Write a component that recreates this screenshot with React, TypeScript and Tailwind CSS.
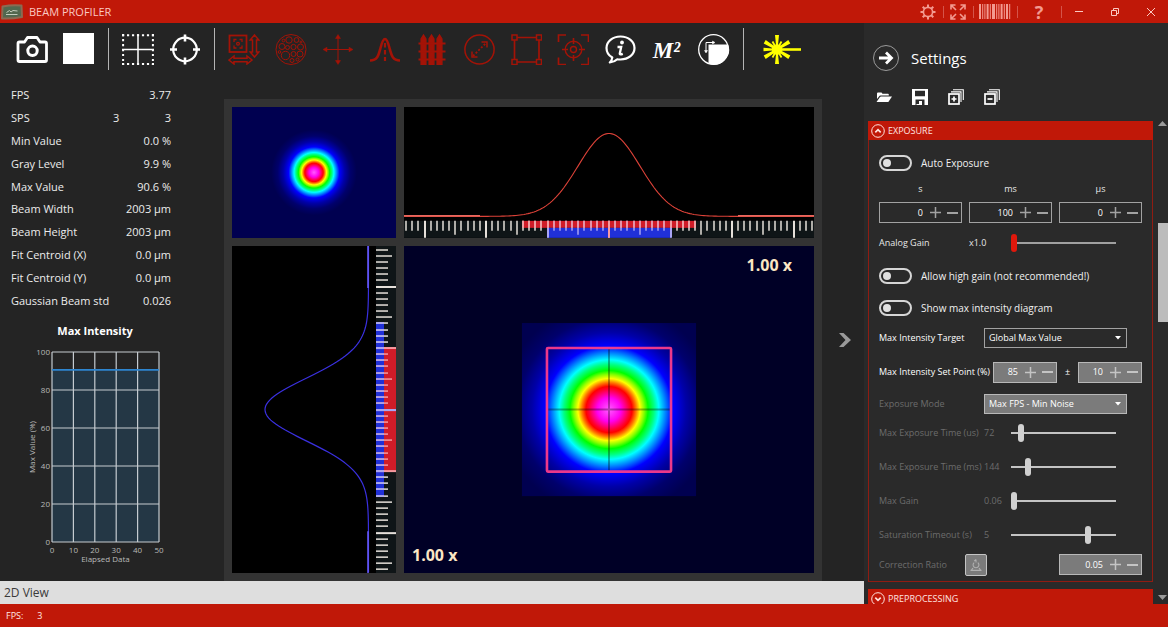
import React, { useState } from "react";

const stats: { label: string; mid?: string; value: string }[] = [
  { label: "FPS", value: "3.77" },
  { label: "SPS", mid: "3", value: "3" },
  { label: "Min Value", value: "0.0 %" },
  { label: "Gray Level", value: "9.9 %" },
  { label: "Max Value", value: "90.6 %" },
  { label: "Beam Width", value: "2003 µm" },
  { label: "Beam Height", value: "2003 µm" },
  { label: "Fit Centroid (X)", value: "0.0 µm" },
  { label: "Fit Centroid (Y)", value: "0.0 µm" },
  { label: "Gaussian Beam std", value: "0.026" },
];

/* ---------- icons ---------- */

function Icon({ children, className = "h-8 w-8" }: { children: React.ReactNode; className?: string }) {
  return (
    <svg viewBox="0 0 32 32" fill="none" stroke="currentColor" aria-hidden="true" className={className}>
      {children}
    </svg>
  );
}

const CameraIcon = () => (
  <Icon>
    <path d="M3.5 9h5l3-4.500h9.500l3 4.500h5a1.500 1.500 0 0 1 1.500 1.500v16.500a1.500 1.500 0 0 1-1.500 1.500h-25.500A1.500 1.500 0 0 1 2 27V10.500A1.500 1.500 0 0 1 3.500 9z" strokeWidth="2.800" strokeLinejoin="round" />
    <circle cx="16.500" cy="17.800" r="4.700" strokeWidth="3" />
  </Icon>
);

const GridIcon = () => (
  <Icon>
    <path d="M0 2.200h32M0 31h32" strokeWidth="2" strokeDasharray="2.200 2.780" />
    <path d="M1.100 1v31M30.900 1v31" strokeWidth="2" strokeDasharray="2.200 2.780" />
    <path d="M16 1v31M0 16.500h32" strokeWidth="1.500" />
  </Icon>
);

const TargetIcon = () => (
  <Icon>
    <circle cx="16" cy="16.500" r="11.800" strokeWidth="2.200" />
    <path d="M16 1.500v7M16 24.500v7M1 16.500h7M24 16.500h7" strokeWidth="2.600" />
  </Icon>
);

const RoiSizeIcon = () => (
  <Icon>
    <rect x="1.500" y="2.500" width="17" height="16.500" strokeWidth="1.800" />
    <path d="M6 9V6.500h2.500M11.500 6.500H14V9M14 12.500V15h-2.500M8.500 15H6v-2.500" strokeWidth="1.300" />
    <circle cx="10" cy="10.800" r="1.400" strokeWidth="1.300" />
    <path d="M26.500 2l4.300 5h-2.300v12h2.300l-4.300 5-4.300-5h2.300V7h-2.300zM1 27l5-4v2.200h13V23l5 4-5 4v-2.200H6V31z" strokeWidth="1.500" />
  </Icon>
);

const HolesIcon = () => (
  <Icon>
    <g strokeWidth="1">
      <circle cx="16" cy="16.500" r="15" />
      <circle cx="14" cy="7" r="3.200" />
      <circle cx="21.500" cy="7" r="2.400" />
      <circle cx="7" cy="13.500" r="3" />
      <circle cx="12.500" cy="14.500" r="2" />
      <circle cx="18.500" cy="14" r="2.600" />
      <circle cx="25.500" cy="14" r="3" />
      <circle cx="10.500" cy="22.500" r="4.200" />
      <circle cx="18.500" cy="21" r="2.500" />
      <circle cx="25" cy="21" r="3" />
      <circle cx="17" cy="27.500" r="2" />
      <circle cx="22.500" cy="26.500" r="1.500" />
      <circle cx="4.500" cy="19" r="1.300" />
      <circle cx="8.500" cy="7.500" r="1.300" />
      <circle cx="26" cy="9" r="1" />
    </g>
  </Icon>
);

const MoveIcon = () => (
  <Icon>
    <path d="M16 3v27M3 16.500h26" strokeWidth="1" />
    <path d="M16 1.500l2.500 4h-5zM16 31.500l2.500-4h-5zM1 16.500l4-2.300v4.600zM31 16.500l-4-2.300v4.600z" strokeWidth="0.500" fill="currentColor" />
  </Icon>
);

const GaussIcon = () => (
  <Icon>
    <path d="M1 27.500c7.500 0 8.500-5 10.500-12.500C13 9 14.500 6 16 6s3 3 4.500 9c2 7.500 3 12.500 10.500 12.500" strokeWidth="2.600" />
    <path d="M16 10v18" strokeWidth="2.200" strokeDasharray="4.500 2.500" />
  </Icon>
);

const FenceIcon = () => (
  <Icon>
    <path d="M5 31.500V6L7.500 2 10 6v25.500zM13 31.500V6l2.500-4L18 6v25.500zM21 31.500V6l2.500-4L26 6v25.500z" fill="currentColor" strokeWidth="1.200" />
    <path d="M2.500 10.500h27M2.500 18.500h27M2.500 26.500h27" strokeWidth="2.200" />
  </Icon>
);

const DiameterIcon = () => (
  <Icon>
    <circle cx="16.500" cy="16.500" r="14.600" strokeWidth="1.500" />
    <path d="M10 23l13-13" strokeWidth="1.800" strokeDasharray="2 1.800" />
    <path d="M18.500 9h5.500v5.500M9 18.500V24h5.500" strokeWidth="1.500" />
  </Icon>
);

const BoxIcon = () => (
  <Icon>
    <path d="M7 4.500h19.500M7 29h19.500M4.500 7v19.500M29 7v19.500" strokeWidth="1.700" />
    <path d="M2 2h5v5H2zM26.500 2h5v5h-5zM2 26.500h5v5H2zM26.500 26.500h5v5h-5z" strokeWidth="1.500" />
  </Icon>
);

const FocusIcon = () => (
  <Icon>
    <path d="M1.500 9V2H9M24 2h7.500v7M31.500 24.500v7H24M9 31.500H1.500v-7" strokeWidth="1.700" />
    <circle cx="16.500" cy="16.500" r="8.300" strokeWidth="1.400" />
    <circle cx="16.500" cy="16.500" r="3" strokeWidth="1.400" />
    <path d="M16.500 5v6M16.500 22v6M5 16.500h6M22 16.500h6" strokeWidth="1.600" />
  </Icon>
);

const InfoBubbleIcon = () => (
  <Icon>
    <path d="M16.500 3.500C8.500 3.500 2.500 8.500 2.500 15c0 4.200 2.300 7.500 5.800 9.500-.2 2-1 3.500-2.500 5 3-.3 5.500-1.300 7.500-3.200 1 .2 2.100.2 3.200.2 8 0 14-5 14-11.500s-6-11.500-14-11.500z" strokeWidth="2.200" strokeLinejoin="round" />
    <circle cx="18" cy="9.500" r="1.900" fill="currentColor" stroke="none" />
    <path d="M13.500 14h3.700l-1.400 6.500q-.3 1.500 3 .3" strokeWidth="2.300" />
  </Icon>
);

const ReflectIcon = () => (
  <Icon>
    <path d="M10.500 11.500h19.700a15 15 0 0 1-19.700 19z" fill="currentColor" stroke="none" />
    <circle cx="15.500" cy="16.500" r="14.800" strokeWidth="1.300" />
    <path d="M8 19V9.500h7.500" strokeWidth="1" />
    <path d="M8 20l-1.500-2.500h3zM17 9.500L14.500 8v3z" strokeWidth="0.500" fill="currentColor" />
  </Icon>
);

const LaserIcon = () => (
  <svg viewBox="0 0 40 32" fill="none" stroke="currentColor" aria-hidden="true" className="h-8 w-10">
    <circle cx="16" cy="16.500" r="5.300" fill="currentColor" stroke="none" />
    <path d="M16 16.500h24" strokeWidth="2.600" />
    <path d="M14 2h4l-1.200 12h-1.600zM14 31h4l-1.200-12h-1.600zM2.500 14.800v3.400l12-.9v-1.600zM2.700 10.600l2-3.600L16 15l-1 2zM2.700 22.400l2 3.600L16 18l-1-2zM29.300 10.600l-2-3.600L16 15l1 2zM29.300 22.400l-2 3.600L16 18l1-2z" fill="currentColor" stroke="none" />
    <path d="M16 16.500L11.500 8.500M16 16.500l-4.500 8M16 16.500l4.500-8M16 16.500l4.500 8" strokeWidth="1.800" />
  </svg>
);

/* ---------- title bar ---------- */

function TitleButton({ label, className, children }: { label: string; className: string; children: React.ReactNode }) {
  return (
    <button type="button" aria-label={label} className={`flex h-full items-center justify-center ${className}`}>
      {children}
    </button>
  );
}

const Divider = () => <span className="-mr-px h-3 w-px bg-[#d4544a]" />;

function TitleBar() {
  const bars = [2, 1, 1, 2, 1, 3, 1, 1, 2, 1, 2, 1];
  let x = 0;
  return (
    <header className="flex h-[23px] shrink-0 items-center bg-[#c01808] text-[#f39a90]">
      <svg viewBox="0 0 24 18" className="h-[18px] w-6 shrink-0" aria-hidden="true">
        <path d="M2.500 3.500Q12 1.500 21.500 2.500L22 14Q12 16 2 15.500z" fill="#52684f" stroke="#8c6a52" strokeWidth="2" strokeLinejoin="round" />
        <path d="M6.500 9.500l3-2 1.500 1.500 2-1.500 4.500.5M6 11.500h11.500" stroke="#c3cdbd" strokeWidth="1" fill="none" />
      </svg>
      <h1 className="ml-[5px] text-[11px] leading-4 text-[#fbc9c3]">BEAM PROFILER</h1>
      <div className="ml-auto flex h-full items-center">
        <TitleButton label="Preferences" className="w-[30px]">
          <svg viewBox="0 0 16 16" className="h-4 w-4" fill="none" stroke="currentColor">
            <circle cx="8" cy="8" r="4.600" strokeWidth="1.700" />
            <path d="M8 3.500V.5M8 15.500v-3M3.500 8h-3M15.500 8h-3M4.800 4.800L2.700 2.700M13.300 13.300l-2.100-2.100M4.800 11.200l-2.100 2.100M13.300 2.700l-2.100 2.100" strokeWidth="2" />
          </svg>
        </TitleButton>
        <Divider />
        <TitleButton label="Full screen" className="w-[30px]">
          <svg viewBox="0 0 16 16" className="h-4 w-4" fill="none" stroke="currentColor" strokeWidth="1.600">
            <path d="M1 5.500V1h4.500M1.500 1.500l4.500 4.500M10.500 1H15v4.500M14.500 1.500L10 6M15 10.500V15h-4.500M14.500 14.500L10 10M5.500 15H1v-4.500M1.500 14.500L6 10" />
          </svg>
        </TitleButton>
        <Divider />
        <TitleButton label="Serial number" className="w-11">
          <svg viewBox="0 0 32 15" className="h-[15px] w-8" fill="currentColor">
            {bars.map((w, i) => {
              const at = x;
              x += w + 1.200;
              return <rect key={i} x={at} y="0" width={w} height="15" />;
            })}
          </svg>
        </TitleButton>
        <Divider />
        <TitleButton label="Help" className="w-11">
          <span className="text-[18px] leading-5 font-bold">?</span>
        </TitleButton>
        <Divider />
        <TitleButton label="Minimize" className="w-9">
          <span className="h-px w-2 bg-[#fbc9c3]" />
        </TitleButton>
        <TitleButton label="Restore" className="w-9">
          <svg viewBox="0 0 8 8" className="h-2 w-2" fill="none" stroke="#fbc9c3">
            <path d="M.5 2.500h5v5h-5zM2.500 2.500v-2h5v5h-2" />
          </svg>
        </TitleButton>
        <TitleButton label="Close" className="w-[35px]">
          <svg viewBox="0 0 8 8" className="h-2 w-2" fill="none" stroke="#fbc9c3">
            <path d="M0 0l8 8M8 0L0 8" />
          </svg>
        </TitleButton>
      </div>
    </header>
  );
}

/* ---------- toolbar ---------- */

function ToolButton({ label, off, className = "w-[47px]", children }: { label: string; off?: boolean; className?: string; children: React.ReactNode }) {
  return (
    <button
      type="button"
      aria-label={label}
      disabled={off}
      className={`flex h-full shrink-0 items-center justify-center text-white disabled:text-[#a31307] ${className}`}
    >
      {children}
    </button>
  );
}

const ToolSeparator = () => (
  <span className="flex w-3 shrink-0 justify-center">
    <span className="h-[42px] w-px bg-[#b4b4b4]" />
  </span>
);

function Toolbar() {
  return (
    <nav aria-label="Tools" className="flex h-[51px] shrink-0 items-center pl-2">
      <ToolButton label="Snapshot"><CameraIcon /></ToolButton>
      <ToolButton label="Stop"><span className="h-[31px] w-[31px] bg-white" /></ToolButton>
      <ToolSeparator />
      <ToolButton label="Grid"><GridIcon /></ToolButton>
      <ToolButton label="Crosshair"><TargetIcon /></ToolButton>
      <ToolSeparator />
      <ToolButton off label="Region size"><RoiSizeIcon /></ToolButton>
      <ToolButton off label="Aperture"><HolesIcon /></ToolButton>
      <ToolButton off label="Move"><MoveIcon /></ToolButton>
      <ToolButton off label="Gaussian fit"><GaussIcon /></ToolButton>
      <ToolButton off label="Limits"><FenceIcon /></ToolButton>
      <ToolButton off label="Diameter"><DiameterIcon /></ToolButton>
      <ToolButton off label="Rectangle"><BoxIcon /></ToolButton>
      <ToolButton off label="Auto centre"><FocusIcon /></ToolButton>
      <ToolButton label="Information"><InfoBubbleIcon /></ToolButton>
      <ToolButton label="M squared">
        <span className="pt-1 font-['Liberation_Serif',serif] text-[23px] leading-8 font-bold italic">M²</span>
      </ToolButton>
      <ToolButton label="Background"><ReflectIcon /></ToolButton>
      <ToolSeparator />
      <ToolButton label="Laser" className="w-16">
        <span className="text-[#ffff00]"><LaserIcon /></span>
      </ToolButton>
    </nav>
  );
}

/* ---------- statistics ---------- */

function StatsTable() {
  return (
    <table className="mx-[11px] mt-[10px] h-[228px] w-[160px] table-fixed text-[11px] leading-4 text-[#ececec]">
      <colgroup>
        <col className="w-[102px]" />
        <col className="w-2" />
        <col className="w-[50px]" />
      </colgroup>
      <tbody>
        {stats.map((s) => (
          <tr key={s.label}>
            <th scope="row" colSpan={s.mid ? 1 : 2} className="p-0 text-left font-normal whitespace-nowrap">
              {s.label}
            </th>
            {s.mid && <td className="p-0 text-left">{s.mid}</td>}
            <td className="p-0 text-right whitespace-nowrap">{s.value}</td>
          </tr>
        ))}
      </tbody>
    </table>
  );
}

function IntensityChart() {
  const left = 52;
  const top = 8;
  const w = 107;
  const h = 190;
  return (
    <figure className="mt-[10px]">
      <figcaption className="w-[190px] text-center text-[11px] leading-[18px] font-bold text-white">Max Intensity</figcaption>
      <svg viewBox="0 0 190 226" className="mt-1 h-[226px] w-[190px]" aria-label="Max value over elapsed data">
        <rect x={left} y={top + h * 0.094} width={w} height={h * 0.906} fill="#243745" />
        {[0, 10, 20, 30, 40, 50].map((v) => {
          const x = left + (w * v) / 50;
          return (
            <g key={v}>
              <line x1={x} x2={x} y1={top} y2={top + h} stroke="#c5cbd0" strokeWidth="1.200" />
              <text x={x} y={top + h + 11} textAnchor="middle" fontSize="8" fill="#b9b9b9">{v}</text>
            </g>
          );
        })}
        {[0, 20, 40, 60, 80, 100].map((v) => {
          const y = top + h - (h * v) / 100;
          return (
            <g key={v}>
              <line x1={left} x2={left + w} y1={y} y2={y} stroke="#c5cbd0" strokeWidth="1.200" />
              <text x={left - 2} y={y + 3} textAnchor="end" fontSize="8" fill="#b9b9b9">{v}</text>
            </g>
          );
        })}
        <line x1={left} x2={left + w} y1={top + h * 0.094} y2={top + h * 0.094} stroke="#2e86d0" strokeWidth="1.800" />
        <text x={left + w / 2} y={top + h + 20} textAnchor="middle" fontSize="8" fill="#b9b9b9">Elapsed Data</text>
        <text transform={`translate(35 ${top + h / 2}) rotate(-90)`} textAnchor="middle" fontSize="8" fill="#b9b9b9">Max Value (%)</text>
      </svg>
    </figure>
  );
}

/* ---------- beam views ---------- */

function BeamGradient({ id, r }: { id: string; r: number }) {
  return (
    <radialGradient id={id} gradientUnits="userSpaceOnUse" cx="205" cy="163.500" r={r}>
      <stop offset="0" stopColor="#ff5cff" />
      <stop offset="0.110" stopColor="#ff00f0" />
      <stop offset="0.190" stopColor="#ff0030" />
      <stop offset="0.215" stopColor="#ff0000" />
      <stop offset="0.255" stopColor="#ff8000" />
      <stop offset="0.290" stopColor="#ffff00" />
      <stop offset="0.330" stopColor="#80ff00" />
      <stop offset="0.365" stopColor="#00ff00" />
      <stop offset="0.420" stopColor="#00ff80" />
      <stop offset="0.465" stopColor="#00ffff" />
      <stop offset="0.530" stopColor="#0080ff" />
      <stop offset="0.595" stopColor="#0000ff" />
      <stop offset="0.720" stopColor="#0000a8" />
      <stop offset="0.850" stopColor="#00006c" />
      <stop offset="1" stopColor="#000050" />
    </radialGradient>
  );
}

function gaussian(centre: number, length: number, value: (g: number) => number, vertical: boolean) {
  const pts: string[] = [];
  for (let i = 0; i <= length; i += 2) {
    const v = value(Math.exp(-((i - centre) ** 2) / (2 * 31 * 31))).toFixed(2);
    pts.push(vertical ? `${v},${i}` : `${i},${v}`);
  }
  return pts.join(" ");
}

function tickList(centre: number, length: number) {
  const out: { at: number; n: number; d: number }[] = [];
  for (let n = -40; n <= 40; n++) {
    const at = centre + n * 6.15;
    if (at > 0 && at < length) out.push({ at, n: Math.abs(n), d: Math.abs(at - centre) });
  }
  return out;
}

function Overview() {
  return (
    <svg viewBox="0 0 410 327" preserveAspectRatio="xMidYMid slice" className="h-full w-full bg-[#00004f]" aria-label="Beam overview">
      <defs><BeamGradient id="overview-beam" r={107} /></defs>
      <rect width="410" height="327" fill="url(#overview-beam)" />
    </svg>
  );
}

function HorizontalProfile() {
  return (
    <svg viewBox="0 0 410 131" preserveAspectRatio="none" className="h-full w-full bg-black" aria-label="Horizontal profile">
      <polyline points={gaussian(205, 410, (g) => 109.500 - 83 * g, false)} fill="none" stroke="#dc4238" strokeWidth="1.100" />
      <path d="M0 109h76M334 109h76" stroke="#e8685e" strokeWidth="1.500" />
      <rect y="114" width="410" height="17" fill="#0f1517" />
      <rect x="118" y="114" width="174" height="7" fill="#d01c28" />
      <rect x="143" y="121" width="124" height="10" fill="#2030d8" />
      {tickList(205, 410).map(({ at, n, d }) => {
        const len = n % 10 === 0 ? 17 : n % 5 === 0 ? 14 : 10;
        const x = Math.round(at);
        return (
          <g key={at} strokeWidth={n % 10 === 0 ? 2 : 1.500}>
            <line x1={x} x2={x} y1="114" y2={114 + len} stroke={d < 62 ? "#a9a4f4" : "#e6e0da"} />
            {d < 87 && <line x1={x} x2={x} y1="114" y2="121" stroke="#f59aa0" />}
            {n === 0 && <line x1={x} x2={x} y1="121" y2="131" stroke="#f59aa0" />}
          </g>
        );
      })}
    </svg>
  );
}

function VerticalProfile() {
  return (
    <svg viewBox="0 0 164 327" preserveAspectRatio="none" className="h-full w-full bg-black" aria-label="Vertical profile">
      <polyline points={gaussian(163.500, 327, (g) => 136.500 - 103.500 * g, true)} fill="none" stroke="#3a30e0" strokeWidth="1.200" />
      <path d="M136 0v42M136 285v42" stroke="#6a5cff" strokeWidth="1.500" />
      <rect x="144" width="20" height="327" fill="#0f1517" />
      <rect x="144" y="76" width="8" height="174" fill="#2030d8" />
      <rect x="152" y="101" width="12" height="124" fill="#d01c28" />
      {tickList(163.500, 327).map(({ at, n, d }) => {
        const len = n % 10 === 0 ? 20 : n % 5 === 0 ? 16 : 12;
        const y = Math.round(at);
        return (
          <g key={at} strokeWidth={n % 10 === 0 ? 2 : 1.500}>
            <line x1="144" x2={144 + len} y1={y} y2={y} stroke={d < 63 ? "#f59aa0" : "#e6e0da"} />
            {d < 87 && <line x1="144" x2="152" y1={y} y2={y} stroke="#a9a4f4" />}
            {n === 0 && <line x1="152" x2="164" y1={y} y2={y} stroke="#a9a4f4" />}
          </g>
        );
      })}
    </svg>
  );
}

function BeamView() {
  return (
    <div className="relative h-full w-full overflow-hidden bg-[#000026]">
      <svg viewBox="0 0 410 327" preserveAspectRatio="xMidYMid slice" className="absolute inset-0 h-full w-full" aria-label="Beam image">
        <defs><BeamGradient id="main-beam" r={107} /></defs>
        <rect width="410" height="327" fill="#000026" />
        <rect x="118" y="77" width="174" height="173" fill="url(#main-beam)" />
        <path d="M205 102v123M144 163.500h122" stroke="#000" strokeOpacity="0.320" strokeWidth="2" />
        <rect x="143" y="102" width="124" height="123.500" rx="1" fill="none" stroke="#ff3d8a" strokeOpacity="0.920" strokeWidth="2.600" />
      </svg>
      <span className="absolute top-[9px] right-[22px] text-[16px] leading-5 font-bold text-[#fbe6c4]">1.00 x</span>
      <span className="absolute bottom-2 left-2 text-[16px] leading-5 font-bold text-[#fbe6c4]">1.00 x</span>
    </div>
  );
}

/* ---------- settings controls ---------- */

function Toggle({ label }: { label: string }) {
  const [on, setOn] = useState(false);
  return (
    <label className="flex h-8 items-center gap-[9px] text-[10px] leading-4 text-[#f0f0f0]">
      <input
        type="checkbox"
        role="switch"
        checked={on}
        onChange={() => setOn(!on)}
        className="h-4 w-[33px] shrink-0 appearance-none rounded-full border-2 border-[#d6d6d6] before:m-0.5 before:block before:h-2 before:w-2 before:rounded-full before:bg-[#e0e0e0] before:content-[''] checked:bg-[#c01808] checked:before:ml-5"
      />
      {label}
    </label>
  );
}

function Spinner({ label, value, filled, className }: { label: string; value: string; filled?: boolean; className: string }) {
  const [v, setV] = useState(value);
  const step = value.includes(".") ? 0.01 : 1;
  const move = (d: number) => setV(String(+(Number(v) + d).toFixed(2)));
  return (
    <div className={`flex h-[21px] shrink-0 items-center border ${filled ? "border-[#b8b8b8] bg-[#7b7b7b] text-[#c4c4c4]" : "border-[#a2a2a2] text-[#a2a2a2]"} ${className}`}>
      <input
        type="text"
        inputMode="decimal"
        aria-label={label}
        value={v}
        onChange={(e) => setV(e.target.value)}
        className="min-w-0 flex-1 bg-transparent pr-1 text-right text-[9px] leading-4 text-white outline-none"
      />
      <button type="button" aria-label={`Increase ${label}`} onClick={() => move(step)} className="flex h-full w-[17px] items-center justify-center">
        <svg viewBox="0 0 11 11" className="h-[11px] w-[11px]" stroke="currentColor" strokeWidth="1.500"><path d="M5.500 0v11M0 5.500h11" /></svg>
      </button>
      <button type="button" aria-label={`Decrease ${label}`} onClick={() => move(-step)} className="flex h-full w-[17px] items-center justify-center">
        <span className="h-0.5 w-[11px] bg-current" />
      </button>
    </div>
  );
}

function Picker({ id, filled, options }: { id: string; filled?: boolean; options: string[] }) {
  return (
    <div className="relative w-[143px]">
      <select
        id={id}
        className={`block h-5 w-full appearance-none border pl-1 text-[9px] leading-4 text-white ${filled ? "border-[#b8b8b8] bg-[#7b7b7b]" : "border-[#a2a2a2] bg-[#2a2a2a]"}`}
      >
        {options.map((o) => <option key={o}>{o}</option>)}
      </select>
      <svg viewBox="0 0 6 4" className="pointer-events-none absolute top-2 right-[6px] h-1 w-[6px]" fill="#fff" aria-hidden="true"><path d="M0 0h6L3 3.500z" /></svg>
    </div>
  );
}

function Slider({ id, value, active }: { id: string; value: number; active?: boolean }) {
  const [v, setV] = useState(value);
  return (
    <input
      id={id}
      type="range"
      min={0}
      max={100}
      value={v}
      onChange={(e) => setV(Number(e.target.value))}
      className={`h-[19px] w-[105px] appearance-none bg-transparent [&::-webkit-slider-runnable-track]:h-0.5 [&::-webkit-slider-thumb]:-mt-[8px] [&::-webkit-slider-thumb]:h-[18px] [&::-webkit-slider-thumb]:w-[6px] [&::-webkit-slider-thumb]:appearance-none [&::-webkit-slider-thumb]:rounded-[3px] ${
        active
          ? "[&::-webkit-slider-runnable-track]:bg-[#a0a0a0] [&::-webkit-slider-thumb]:bg-[#e0180c]"
          : "[&::-webkit-slider-runnable-track]:bg-[#c4c4c4] [&::-webkit-slider-thumb]:bg-[#d0d0d0]"
      }`}
    />
  );
}

function SliderRow({ id, label, text, value, active }: { id: string; label: string; text: string; value: number; active?: boolean }) {
  return (
    <div className={`flex h-[34px] items-center text-[9px] leading-4 ${active ? "text-[#e8e8e8]" : "text-[#6c6c6c]"}`}>
      <label htmlFor={id} className={`whitespace-nowrap ${active ? "w-[90px]" : "w-[105px]"}`}>{label}</label>
      <span className={active ? "w-[42px]" : "w-[27px]"}>{text}</span>
      <Slider id={id} value={value} active={active} />
    </div>
  );
}

function SectionHeader({ title, open }: { title: string; open?: boolean }) {
  return (
    <button type="button" aria-expanded={!!open} className="flex h-[19px] w-full items-center gap-[3px] bg-[#c01808] pl-[3px] text-[9px] leading-4 text-[#ffe4e0]">
      <svg viewBox="0 0 14 14" className="h-[14px] w-[14px]" fill="none" stroke="currentColor">
        <circle cx="7" cy="7" r="6.300" strokeWidth="1" />
        <path d={open ? "M4.300 8.300L7 5.700l2.700 2.600" : "M4.300 5.700L7 8.300l2.700-2.600"} strokeWidth="1.700" />
      </svg>
      {title}
    </button>
  );
}

function StackIcon({ minus }: { minus?: boolean }) {
  return (
    <svg viewBox="0 0 16 16" className="h-4 w-4" fill="none" stroke="currentColor">
      <rect x="1" y="5" width="10" height="10" strokeWidth="1.700" />
      <path d="M3 2.900h10v10M5 .700h10.300v10.300" strokeWidth="1.100" />
      <path d={minus ? "M3.500 10h5" : "M3.500 10h5M6 7.500v5"} strokeWidth="1.700" />
    </svg>
  );
}

function ExposureSection() {
  return (
    <section className="flex flex-col border border-t-0 border-[#8f1c12] pt-[7px] pb-1 pl-[10px]">
      <Toggle label="Auto Exposure" />
      <div className="flex justify-between pr-[10px]">
        {[["s", "0"], ["ms", "100"], ["µs", "0"]].map(([unit, value]) => (
          <div key={unit} className="w-[83px]">
            <div className="h-5 text-center text-[9px] leading-5 text-[#e8e8e8]">{unit}</div>
            <div className="flex h-[27px] items-center"><Spinner label={unit} value={value} className="w-full" /></div>
          </div>
        ))}
      </div>
      <SliderRow id="analog-gain" label="Analog Gain" text="x1.0" value={0} active />
      <Toggle label="Allow high gain (not recommended!)" />
      <Toggle label="Show max intensity diagram" />
      <div className="flex h-7 items-center text-[9px] leading-4 text-white">
        <label htmlFor="target" className="w-[105px]">Max Intensity Target</label>
        <Picker id="target" options={["Global Max Value", "Region Max Value"]} />
      </div>
      <div className="flex h-10 items-center pr-[10px] text-[9px] leading-4 text-white">
        <span className="flex-1 whitespace-nowrap">Max Intensity Set Point (%)</span>
        <Spinner label="Set point" value="85" filled className="w-[64px]" />
        <span className="w-[21px] text-center">±</span>
        <Spinner label="Tolerance" value="10" filled className="w-[64px]" />
      </div>
      <div className="flex h-6 items-center text-[9px] leading-4 text-[#6c6c6c]">
        <label htmlFor="mode" className="w-[105px]">Exposure Mode</label>
        <Picker id="mode" filled options={["Max FPS - Min Noise", "Min FPS - Max Range"]} />
      </div>
      <SliderRow id="max-us" label="Max Exposure Time (us)" text="72" value={7} />
      <SliderRow id="max-ms" label="Max Exposure Time (ms)" text="144" value={14} />
      <SliderRow id="max-gain" label="Max Gain" text="0.06" value={0} />
      <SliderRow id="timeout" label="Saturation Timeout (s)" text="5" value={75} />
      <div className="flex h-[25px] items-center pr-[10px] text-[9px] leading-4 text-[#6c6c6c]">
        <span className="w-[86px]">Correction Ratio</span>
        <button type="button" aria-label="Reset correction ratio" className="mr-auto flex h-[22px] w-[22px] items-center justify-center rounded-[2px] border border-[#c4c4c4] bg-[#7b7b7b] text-[#b0b0b0]">
          <svg viewBox="0 0 12 12" className="h-3 w-3" fill="none" stroke="currentColor">
            <path d="M4.200 3.600a2.900 2.900 0 1 0 3.600 0M6 .500v3M4.200 2.200L6 .500" strokeWidth="1.100" />
            <path d="M.500 11.300h11M1.500 11l1.500-2M10.500 11L9 9" strokeWidth="1.200" />
          </svg>
        </button>
        <Spinner label="Correction ratio" value="0.05" filled className="w-[83px]" />
      </div>
    </section>
  );
}

function SettingsPanel() {
  const tool = "flex h-5 w-9 items-center justify-center text-white";
  return (
    <aside className="flex w-[304px] shrink-0 flex-col bg-[#2a2a2a]">
      <div className="flex h-16 shrink-0 items-center gap-3 pt-[6px] pl-[9px]">
        <button type="button" aria-label="Hide settings" className="flex h-[26px] w-[26px] items-center justify-center rounded-full border border-[#9a9a9a] text-white">
          <svg viewBox="0 0 16 14" className="h-[14px] w-4" fill="none" stroke="currentColor" strokeWidth="2.800"><path d="M1 7h13M8 1.500L13.500 7 8 12.500" /></svg>
        </button>
        <h2 className="text-[15px] leading-5 text-white">Settings</h2>
      </div>
      <div className="flex h-[34px] shrink-0 items-start pl-[2px]">
        <button type="button" aria-label="Open" className={tool}>
          <svg viewBox="0 0 16 12" className="h-3 w-4" fill="currentColor"><path d="M1 8V2.500q0-1 1-1h3.500l1 1.200H12q.8 0 .8 1V4.500H4.500Q3.500 4.500 3 5.500zM.500 11L4 6q.4-.6 1-.6h11L12.700 10.400q-.4.6-1 .6z" /></svg>
        </button>
        <button type="button" aria-label="Save" className={tool}>
          <svg viewBox="0 0 16 16" className="h-4 w-4" fill="currentColor"><path fillRule="evenodd" d="M0 0h16v16h-3.500v-5.500h-9V16H0zM3 1.700v5.600h10V1.700zM7 12h3v4H4.500v-1H7z" /></svg>
        </button>
        <button type="button" aria-label="Expand all" className={tool}><StackIcon /></button>
        <button type="button" aria-label="Collapse all" className={tool}><StackIcon minus /></button>
      </div>
      <div className="flex min-h-0 flex-1">
        <div className="ml-1 min-w-0 flex-1 overflow-hidden">
          <SectionHeader title="EXPOSURE" open />
          <ExposureSection />
          <div className="mt-[7px]"><SectionHeader title="PREPROCESSING" /></div>
        </div>
        <div className="flex w-[15px] shrink-0 flex-col items-end" aria-hidden="true">
          <svg viewBox="0 0 10 6" className="h-[6px] w-[10px]" fill="#9a9a9a"><path d="M0 5h9L4.500 0z" /></svg>
          <div className="grid w-[10px] flex-1 grid-rows-[96fr_99fr_272fr]">
            <span className="row-start-2 bg-[#bcbcbc]" />
          </div>
          <svg viewBox="0 0 10 10" className="h-[10px] w-[10px]" fill="#9a9a9a"><path d="M0 1h9L4.500 6z" /></svg>
        </div>
      </div>
    </aside>
  );
}

export default function App() {
  return (
    <div className="flex h-screen flex-col overflow-hidden bg-[#242424] font-['Open_Sans','Noto_Sans',sans-serif]">
      <TitleBar />
      <div className="flex min-h-0 flex-1">
        <main className="flex min-w-0 flex-1 flex-col">
          <Toolbar />
          <div className="flex min-h-0 flex-1">
            <div className="w-56 shrink-0 overflow-hidden">
              <StatsTable />
              <IntensityChart />
            </div>
            <div className="mt-[25px] grid min-h-0 min-w-0 flex-1 grid-cols-[minmax(0,2fr)_minmax(0,5fr)] grid-rows-[minmax(0,2fr)_minmax(0,5fr)] gap-2 bg-[#333333] p-2">
              <Overview />
              <HorizontalProfile />
              <VerticalProfile />
              <BeamView />
            </div>
            <button type="button" aria-label="Next view" className="flex w-[42px] shrink-0 items-center justify-center pt-6 pl-1 text-[#9a9a9a]">
              <svg viewBox="0 0 12 14" className="h-[14px] w-3" fill="currentColor"><path d="M0 0h4.500L12 7l-7.500 7H0l6.500-7z" /></svg>
            </button>
          </div>
          <div className="h-[23px] shrink-0 bg-[#dedede] pl-1 text-[12px] leading-[24px] text-[#3a3a3a]">2D View</div>
        </main>
        <SettingsPanel />
      </div>
      <footer className="flex h-[23px] shrink-0 items-center gap-[14px] bg-[#c01808] pl-[6px] text-[9px] leading-4 text-[#ffe8e4]">
        <span>FPS:</span>
        <span>3</span>
      </footer>
    </div>
  );
}
